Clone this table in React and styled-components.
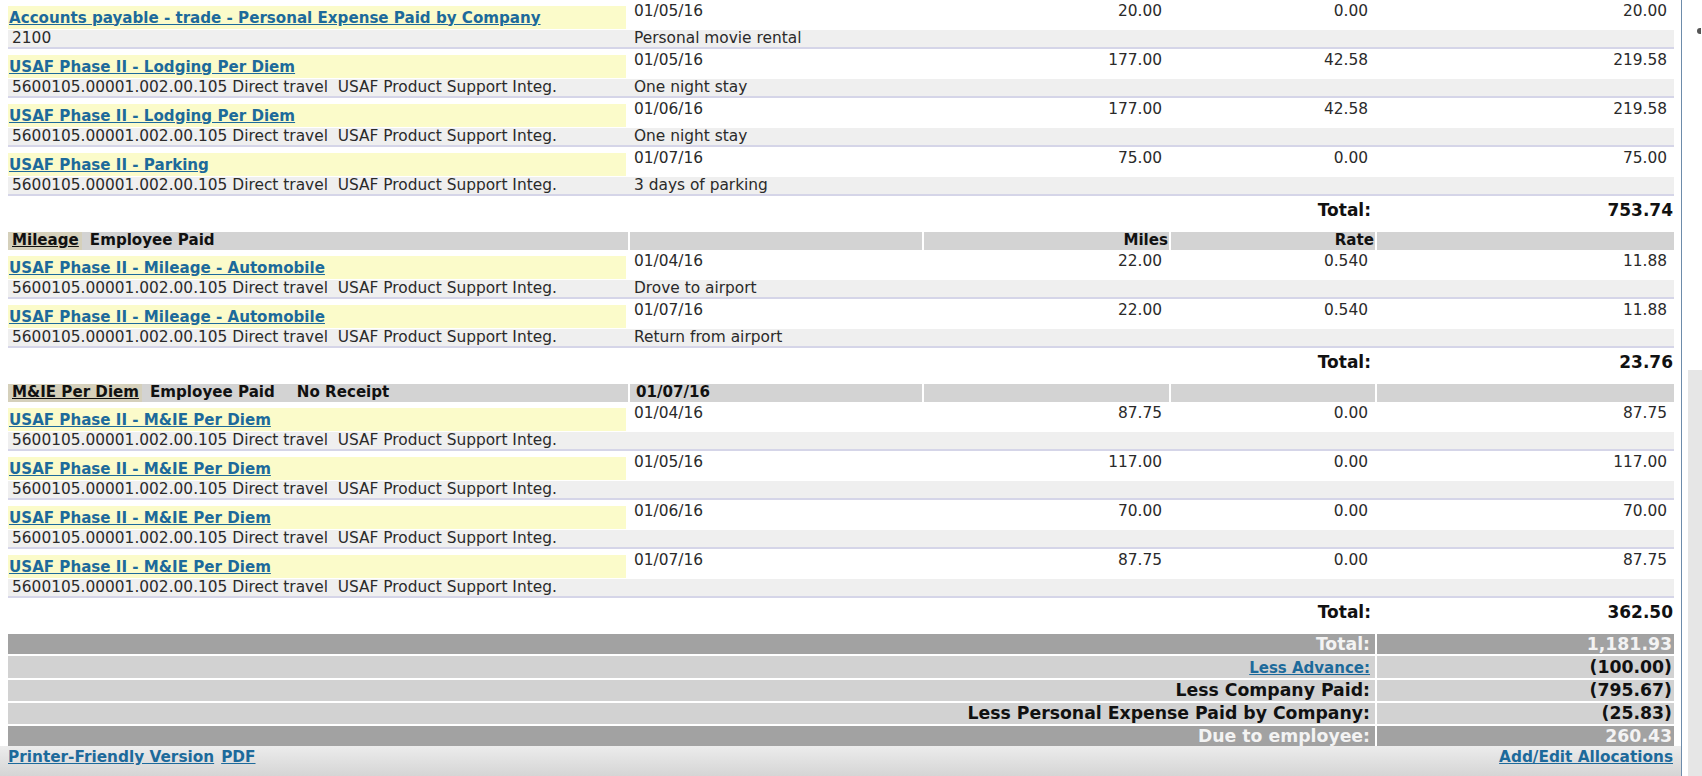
import React from 'react';
import styled, { createGlobalStyle } from 'styled-components';

const COLS = '620px 294px 247px 206px 299px';
const LINK = '#1d6a9b';
const ACCOUNT = '5600105.00001.002.00.105 Direct travel  USAF Product Support Integ.';

const sections = [
  {
    key: 'travel',
    items: [
      { name: 'Accounts payable - trade - Personal Expense Paid by Company', account: '2100', date: '01/05/16', note: 'Personal movie rental', a: '20.00', b: '0.00', c: '20.00' },
      { name: 'USAF Phase II - Lodging Per Diem', account: ACCOUNT, date: '01/05/16', note: 'One night stay', a: '177.00', b: '42.58', c: '219.58' },
      { name: 'USAF Phase II - Lodging Per Diem', account: ACCOUNT, date: '01/06/16', note: 'One night stay', a: '177.00', b: '42.58', c: '219.58' },
      { name: 'USAF Phase II - Parking', account: ACCOUNT, date: '01/07/16', note: '3 days of parking', a: '75.00', b: '0.00', c: '75.00' },
    ],
    total: '753.74',
  },
  {
    key: 'mileage',
    head: { tag: 'Mileage', extra: ['Employee Paid'], date: '', cols: ['Miles', 'Rate'] },
    items: [
      { name: 'USAF Phase II - Mileage - Automobile', account: ACCOUNT, date: '01/04/16', note: 'Drove to airport', a: '22.00', b: '0.540', c: '11.88' },
      { name: 'USAF Phase II - Mileage - Automobile', account: ACCOUNT, date: '01/07/16', note: 'Return from airport', a: '22.00', b: '0.540', c: '11.88' },
    ],
    total: '23.76',
  },
  {
    key: 'mie',
    head: { tag: 'M&IE Per Diem', extra: ['Employee Paid', 'No Receipt'], date: '01/07/16', cols: ['', ''] },
    items: [
      { name: 'USAF Phase II - M&IE Per Diem', account: ACCOUNT, date: '01/04/16', note: '', a: '87.75', b: '0.00', c: '87.75' },
      { name: 'USAF Phase II - M&IE Per Diem', account: ACCOUNT, date: '01/05/16', note: '', a: '117.00', b: '0.00', c: '117.00' },
      { name: 'USAF Phase II - M&IE Per Diem', account: ACCOUNT, date: '01/06/16', note: '', a: '70.00', b: '0.00', c: '70.00' },
      { name: 'USAF Phase II - M&IE Per Diem', account: ACCOUNT, date: '01/07/16', note: '', a: '87.75', b: '0.00', c: '87.75' },
    ],
    total: '362.50',
  },
];

const summary = [
  { label: 'Total:', value: '1,181.93', dark: true, h: 20 },
  { label: 'Less Advance:', value: '(100.00)', link: true, h: 22 },
  { label: 'Less Company Paid:', value: '(795.67)', h: 21 },
  { label: 'Less Personal Expense Paid by Company:', value: '(25.83)', h: 21 },
  { label: 'Due to employee:', value: '260.43', dark: true, h: 20 },
];

const SectionHeader = ({ head }) => (
  <HeadRow>
    <HeadCell>
      <HeadTag>{head.tag}</HeadTag>
      {head.extra.map((t) => (
        <HeadExtra key={t}>{t}</HeadExtra>
      ))}
    </HeadCell>
    <HeadCell>{head.date}</HeadCell>
    <HeadCell $right>{head.cols[0]}</HeadCell>
    <HeadCell $right>{head.cols[1]}</HeadCell>
    <HeadCell />
  </HeadRow>
);

const ExpenseItem = ({ item }) => (
  <Item>
    <AccountCell>
      <AccountBar>
        <AccountLink href="#">{item.name}</AccountLink>
      </AccountBar>
    </AccountCell>
    <TopCell>{item.date}</TopCell>
    <TopCell $right>{item.a}</TopCell>
    <TopCell $right>{item.b}</TopCell>
    <TopCell $right>{item.c}</TopCell>
    <SubCell $first>{item.account}</SubCell>
    <SubCell>{item.note}</SubCell>
    <SubCell />
    <SubCell />
    <SubCell />
  </Item>
);

const App = () => (
  <Page>
    <GlobalStyle />
    <Content>
      <Report>
        {sections.map((s) => (
          <section key={s.key}>
            {s.head && <SectionHeader head={s.head} />}
            {s.items.map((it, i) => (
              <ExpenseItem key={i} item={it} />
            ))}
            <TotalRow>
              <TotalLabel>Total:</TotalLabel>
              <TotalValue>{s.total}</TotalValue>
            </TotalRow>
          </section>
        ))}
        <Summary>
          {summary.map((r) => (
            <SummaryRow key={r.label} $dark={r.dark} $h={r.h}>
              <SummaryLabel>
                {r.link ? <SummaryLink href="#">{r.label}</SummaryLink> : r.label}
              </SummaryLabel>
              <SummaryValue>{r.value}</SummaryValue>
            </SummaryRow>
          ))}
        </Summary>
      </Report>
      <Footer>
        <FooterGroup>
          <FooterLink href="#">Printer-Friendly Version</FooterLink>
          <FooterLink href="#">PDF</FooterLink>
        </FooterGroup>
        <FooterLink href="#">Add/Edit Allocations</FooterLink>
      </Footer>
    </Content>
    <ScrollStrip>
      <ScrollCap />
      <ScrollThumb />
    </ScrollStrip>
  </Page>
);

export default App;

// region STYLES

const GlobalStyle = createGlobalStyle`
  html, body {
    margin: 0;
    padding: 0;
    background: #ffffff;
    overflow: hidden;
  }
  body {
    font-family: "DejaVu Sans", Verdana, sans-serif;
    font-size: 15.4px;
    color: #2a2a2a;
  }
`;

const Page = styled.div`
  display: flex;
  height: 776px;
  overflow: hidden;
`;

const Content = styled.div`
  flex: 1;
  display: flex;
  flex-direction: column;
`;

const Report = styled.div`
  width: 1666px;
  margin: 0 0 0 8px;
`;

const HeadRow = styled.div`
  display: grid;
  grid-template-columns: ${COLS};
  height: 18px;
  background: #d3d3d3;
  font-size: 15.1px;
  font-weight: bold;
  line-height: 17px;
  color: #111;
`;

const HeadCell = styled.div`
  padding: 0 ${(p) => (p.$right ? '1px' : '6px')} 0 6px;
  text-align: ${(p) => (p.$right ? 'right' : 'left')};
  white-space: nowrap;

  & + & {
    border-left: 2px solid #ffffff;
  }

  &:first-child {
    padding-left: 0;
  }
`;

const HeadTag = styled.span`
  display: inline-block;
  height: 18px;
  background: #d5d0bb;
  padding: 0 3px 0 4px;
  text-decoration: underline;
`;

const HeadExtra = styled.span`
  margin-left: 8px;

  & + & {
    margin-left: 22px;
  }
`;

const Item = styled.div`
  display: grid;
  grid-template-columns: ${COLS};
  grid-template-rows: 30px 17px;
  border-bottom: 2px solid #d5d5e8;
`;

const AccountCell = styled.div`
  padding: 6px 2px 1px 0;
`;

const AccountBar = styled.div`
  height: 100%;
  display: flex;
  align-items: center;
  padding-left: 1px;
  background: #fbfbca;
`;

const AccountLink = styled.a`
  color: ${LINK};
  font-size: 15.1px;
  font-weight: bold;
  text-decoration: underline;
  white-space: nowrap;
`;

const TopCell = styled.div`
  padding: 2px ${(p) => (p.$right ? '7px' : '6px')} 0 6px;
  line-height: 18px;
  text-align: ${(p) => (p.$right ? 'right' : 'left')};
  white-space: nowrap;
`;

const SubCell = styled.div`
  background: #efefef;
  line-height: 17px;
  padding: 0 6px 0 ${(p) => (p.$first ? '4px' : '6px')};
  white-space: pre;
  overflow: hidden;
`;

const TotalRow = styled.div`
  display: grid;
  grid-template-columns: ${COLS};
  height: 28px;
  margin-bottom: 8px;
  align-items: center;
  font-size: 17px;
  font-weight: bold;
  color: #111;
`;

const TotalLabel = styled.div`
  grid-column: 4;
  text-align: right;
  padding-right: 4px;
`;

const TotalValue = styled.div`
  grid-column: 5;
  text-align: right;
  padding-right: 1px;
`;

const Summary = styled.div`
  display: flex;
  flex-direction: column;
  gap: 2px;
`;

const SummaryRow = styled.div`
  display: grid;
  grid-template-columns: 1367px 299px;
  height: ${(p) => p.$h}px;
  line-height: ${(p) => p.$h}px;
  background: ${(p) => (p.$dark ? '#a2a2a2' : '#d2d2d2')};
  color: ${(p) => (p.$dark ? '#f3f3f3' : '#111111')};
  font-size: 17.3px;
  font-weight: bold;
`;

const SummaryLabel = styled.div`
  text-align: right;
  padding-right: 5px;
  white-space: nowrap;
`;

const SummaryValue = styled.div`
  text-align: right;
  padding-right: 2px;
  border-left: 2px solid #ffffff;
`;

const SummaryLink = styled.a`
  color: ${LINK};
  font-size: 15px;
  text-decoration: underline;
`;

const Footer = styled.div`
  flex: 1;
  display: flex;
  justify-content: space-between;
  align-items: flex-start;
  padding: 2px 8px 0 8px;
  background: linear-gradient(#ececec, #d5d5d5);
`;

const FooterGroup = styled.div`
  display: flex;
  gap: 7px;
`;

const FooterLink = styled.a`
  color: ${LINK};
  font-size: 15.3px;
  font-weight: bold;
  text-decoration: underline;
  line-height: 18px;
`;

const ScrollStrip = styled.div`
  width: 20px;
  display: flex;
  flex-direction: column;
  border-left: 1px solid #6d8cab;
  background: #ffffff;
`;

const ScrollCap = styled.div`
  height: 370px;
  position: relative;

  &::after {
    content: '';
    position: absolute;
    top: 28px;
    right: 1px;
    width: 4px;
    height: 6px;
    border-radius: 3px 0 0 3px;
    background: #555;
  }
`;

const ScrollThumb = styled.div`
  flex: 1;
  margin-left: 6px;
  background: #e6e6e6;
`;

// endregion
